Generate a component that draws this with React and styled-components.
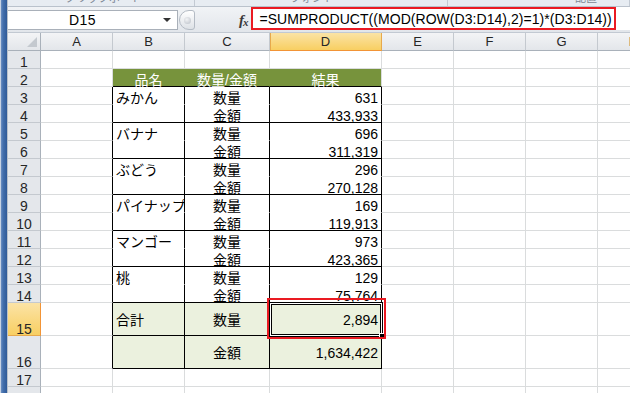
import React from 'react';
import styled, { createGlobalStyle } from 'styled-components';

const GRID = '#dadcdd';
const BLACK = '#000';
const GREEN = '#77933c';
const LIGHT = '#ebf1de';
const RED = '#ea1a22';

const GlobalStyle = createGlobalStyle`
  html, body { margin: 0; padding: 0; background: #fff; overflow: hidden; }
  body { width: 630px; height: 393px; font-family: "Liberation Sans", "Noto Sans CJK JP", sans-serif; }
  * { box-sizing: border-box; }
`;

const Window = styled.div`
  display: flex;
  width: 630px;
  height: 393px;
  overflow: hidden;
`;

const Frame = styled.div`
  flex: none;
  width: 8px;
  background: linear-gradient(90deg, #c6d2e3 0, #c6d2e3 1px, #6b8fc2 1px, #4470ad 3px, #2f5a98 7px, #b9c1cb 7px);
`;

const Main = styled.div`
  flex: 1;
  min-width: 0;
  display: flex;
  flex-direction: column;
  overflow: hidden;
`;

const Ribbon = styled.div`
  flex: none;
  height: 7px;
  display: flex;
  background: #e7ecf2;
  border-bottom: 1px solid #bac2cc;
  overflow: hidden;
`;

const RibbonGroup = styled.div`
  flex: none;
  width: ${(p) => p.$w}px;
  padding-left: ${(p) => p.$pl}px;
  border-right: 1px solid #c3cad3;
  overflow: hidden;
`;

const RibbonLabel = styled.div`
  margin-top: -9px;
  font-family: "Noto Sans CJK JP", sans-serif;
  font-size: 11px;
  line-height: 13px;
  color: #7d8795;
  white-space: nowrap;
`;

const FormulaBar = styled.div`
  flex: none;
  height: 26px;
  display: flex;
  align-items: flex-start;
  background: linear-gradient(#f1f3f6, #e2e6eb);
  border-bottom: 1px solid #c2c9d2;
`;

const NameBox = styled.div`
  flex: none;
  width: 170px;
  height: 20px;
  margin-top: 3px;
  display: flex;
  align-items: center;
  background: #fff;
  border: 1px solid #a9b0b9;
  border-left: none;
  font-size: 14px;
  color: #000;
`;

const NameText = styled.div`
  width: 150px;
  text-align: center;
  line-height: 18px;
  letter-spacing: 0.5px;
`;

const DropArrow = styled.div`
  width: 20px;
  display: flex;
  justify-content: center;
  &::before {
    content: '';
    border-left: 4px solid transparent;
    border-right: 4px solid transparent;
    border-top: 4px solid #333;
  }
`;

const Grip = styled.div`
  flex: none;
  width: 16px;
  height: 20px;
  margin: 3px 0 0 1px;
  display: flex;
  align-items: center;
  justify-content: center;
  border: 1px solid #b4bbc4;
  border-radius: 10px 3px 3px 10px;
  background: linear-gradient(#ffffff, #dde1e6);
  &::before {
    content: '';
    width: 7px;
    height: 7px;
    border-radius: 50%;
    background: radial-gradient(circle at 40% 35%, #f2f3f5, #b9bfc7);
  }
`;

const Fx = styled.div`
  flex: none;
  margin: 5px 3px 0 44px;
  font-family: "Liberation Serif", serif;
  font-style: italic;
  font-weight: bold;
  font-size: 15px;
  line-height: 16px;
  color: #3a3a3a;
  letter-spacing: -1px;
  sub { font-size: 11px; vertical-align: -1px; }
`;

const FormulaField = styled.div`
  flex: 1;
  height: 23px;
  display: flex;
  background: #fff;
`;

const FormulaFrame = styled.div`
  flex: none;
  width: 365px;
  height: 23px;
  border: 2px solid ${RED};
  padding: 2px 0 0 7px;
  font-size: 14px;
  line-height: 17px;
  letter-spacing: 0.05px;
  color: #000;
  white-space: nowrap;
`;

const Sheet = styled.div`
  flex: none;
  display: grid;
  grid-template-columns: 33px ${(p) => p.$cols};
  grid-template-rows: 18px ${(p) => p.$rows};
`;

const Corner = styled.div`
  display: flex;
  align-items: flex-end;
  justify-content: flex-end;
  padding: 0 3px 3px 0;
  background: linear-gradient(#f3f4f6, #e3e6ea);
  border-right: 1px solid #a9b1ba;
  border-bottom: 1px solid #a9b1ba;
  &::before {
    content: '';
    border-left: 10px solid transparent;
    border-bottom: 10px solid #c4c9cf;
  }
`;

const ColHead = styled.div`
  text-align: center;
  font-size: 13px;
  line-height: 18px;
  color: #262626;
  background: ${(p) => (p.$active ? 'linear-gradient(#fbe3a6, #f8cf62)' : 'linear-gradient(#f3f4f6, #e3e6ea)')};
  border-right: 1px solid ${(p) => (p.$active ? '#e7a94c' : '#c4c9cf')};
  border-bottom: 1px solid ${(p) => (p.$active ? '#f29436' : '#a9b1ba')};
  box-shadow: ${(p) => (p.$active ? 'inset 1px 0 0 #e7a94c' : 'none')};
`;

const RowHead = styled.div`
  text-align: center;
  font-size: 14px;
  line-height: 18px;
  padding-top: ${(p) => p.$pt}px;
  color: #262626;
  background: ${(p) => (p.$active ? 'linear-gradient(#fbe3a6, #f8cf62)' : '#e4e7eb')};
  border-right: 1px solid ${(p) => (p.$active ? '#f29436' : '#a9b1ba')};
  border-bottom: 1px solid ${(p) => (p.$active ? '#e7a94c' : '#c4c9cf')};
  overflow: hidden;
`;

const Cell = styled.div`
  position: relative;
  padding: ${(p) => p.$pt}px 3px 0;
  font-size: 14px;
  line-height: 18px;
  white-space: nowrap;
  text-align: ${(p) => p.$align};
  color: ${(p) => p.$color};
  background: ${(p) => p.$bg};
  border-right: 1px solid ${(p) => p.$right};
  border-bottom: 1px solid ${(p) => p.$bottom};
  overflow-x: ${(p) => (p.$clip ? 'clip' : 'visible')};
`;

const ActiveFrame = styled.div`
  position: absolute;
  z-index: 2;
  top: -1px;
  left: -1px;
  right: -2px;
  bottom: -2px;
  border: 1px solid #000;
  box-shadow: inset 0 0 0 1px #fff, inset 0 0 0 2px #000;
  pointer-events: none;
`;

const FillHandle = styled.div`
  position: absolute;
  right: -3px;
  bottom: -3px;
  width: 6px;
  height: 6px;
  background: #000;
  border: 1px solid #fff;
`;

const RedMark = styled.div`
  position: absolute;
  z-index: 3;
  top: -5px;
  left: -3px;
  right: -5px;
  bottom: -4px;
  border: 2px solid ${RED};
  pointer-events: none;
`;

const COLS = [
  ['A', 72],
  ['B', 72],
  ['C', 85],
  ['D', 112],
  ['E', 72],
  ['F', 72],
  ['G', 72],
  ['H', 72],
];
const ROWS = Array.from({ length: 18 }, (_, i) => i + 1);
const rowHeight = (r) => (r === 15 || r === 16 ? 33 : 18);

const FRUITS = [
  ['みかん', '631', '433,933'],
  ['バナナ', '696', '311,319'],
  ['ぶどう', '296', '270,128'],
  ['パイナップル', '169', '119,913'],
  ['マンゴー', '973', '423,365'],
  ['桃', '129', '75,764'],
];

function getCell(r, c) {
  const inT = c === 'B' || c === 'C' || c === 'D';
  const d = {
    text: '',
    align: 'left',
    bg: '#fff',
    color: '#000',
    right: GRID,
    bottom: GRID,
    pt: r === 15 || r === 16 ? 8 : 2,
  };
  if (r >= 3 && r <= 16 && (inT || c === 'A')) d.right = BLACK;
  if (!inT) return d;
  if (r === 2) {
    d.bg = GREEN;
    d.color = '#fff';
    d.align = 'center';
    d.text = { B: '品名', C: '数量/金額', D: '結果' }[c];
    d.right = c === 'D' ? GRID : GREEN;
    d.bottom = BLACK;
  } else if (r >= 3 && r <= 14) {
    const idx = Math.floor((r - 3) / 2);
    const first = (r - 3) % 2 === 0;
    d.bottom = first ? '#fff' : BLACK;
    if (c === 'B' && first) d.text = FRUITS[idx][0];
    if (c === 'C') {
      d.text = first ? '数量' : '金額';
      d.align = 'center';
    }
    if (c === 'D') {
      d.text = first ? FRUITS[idx][1] : FRUITS[idx][2];
      d.align = 'right';
    }
  } else if (r === 15 || r === 16) {
    d.bg = LIGHT;
    d.bottom = BLACK;
    if (c === 'B' && r === 15) d.text = '合計';
    if (c === 'C') {
      d.text = r === 15 ? '数量' : '金額';
      d.align = 'center';
    }
    if (c === 'D') {
      d.text = r === 15 ? '2,894' : '1,634,422';
      d.align = 'right';
    }
  }
  return d;
}

export default function App() {
  const cols = COLS.map(([, w]) => `${w}px`).join(' ');
  const rows = ROWS.map((r) => `${rowHeight(r)}px`).join(' ');
  return (
    <>
      <GlobalStyle />
      <Window>
        <Frame />
        <Main>
          <Ribbon>
            <RibbonGroup $w={187} $pl={57}>
              <RibbonLabel>クリップボード</RibbonLabel>
            </RibbonGroup>
            <RibbonGroup $w={253} $pl={95}>
              <RibbonLabel>フォント</RibbonLabel>
            </RibbonGroup>
            <RibbonGroup $w={182} $pl={127}>
              <RibbonLabel>配置</RibbonLabel>
            </RibbonGroup>
          </Ribbon>
          <FormulaBar>
            <NameBox>
              <NameText>D15</NameText>
              <DropArrow />
            </NameBox>
            <Grip />
            <Fx>
              f<sub>x</sub>
            </Fx>
            <FormulaField>
              <FormulaFrame>=SUMPRODUCT((MOD(ROW(D3:D14),2)=1)*(D3:D14))</FormulaFrame>
            </FormulaField>
          </FormulaBar>
          <Sheet $cols={cols} $rows={rows}>
            <Corner />
            {COLS.map(([c]) => (
              <ColHead key={c} $active={c === 'D'}>
                {c}
              </ColHead>
            ))}
            {ROWS.map((r) => (
              <React.Fragment key={r}>
                <RowHead $active={r === 15} $pt={rowHeight(r) - 16}>
                  {r}
                </RowHead>
                {COLS.map(([c]) => {
                  const d = getCell(r, c);
                  const active = r === 15 && c === 'D';
                  return (
                    <Cell
                      key={c}
                      $pt={d.pt}
                      $align={d.align}
                      $bg={d.bg}
                      $color={d.color}
                      $right={d.right}
                      $bottom={d.bottom}
                      $clip={!active}
                    >
                      {d.text}
                      {active && (
                        <>
                          <ActiveFrame>
                            <FillHandle />
                          </ActiveFrame>
                          <RedMark />
                        </>
                      )}
                    </Cell>
                  );
                })}
              </React.Fragment>
            ))}
          </Sheet>
        </Main>
      </Window>
    </>
  );
}
